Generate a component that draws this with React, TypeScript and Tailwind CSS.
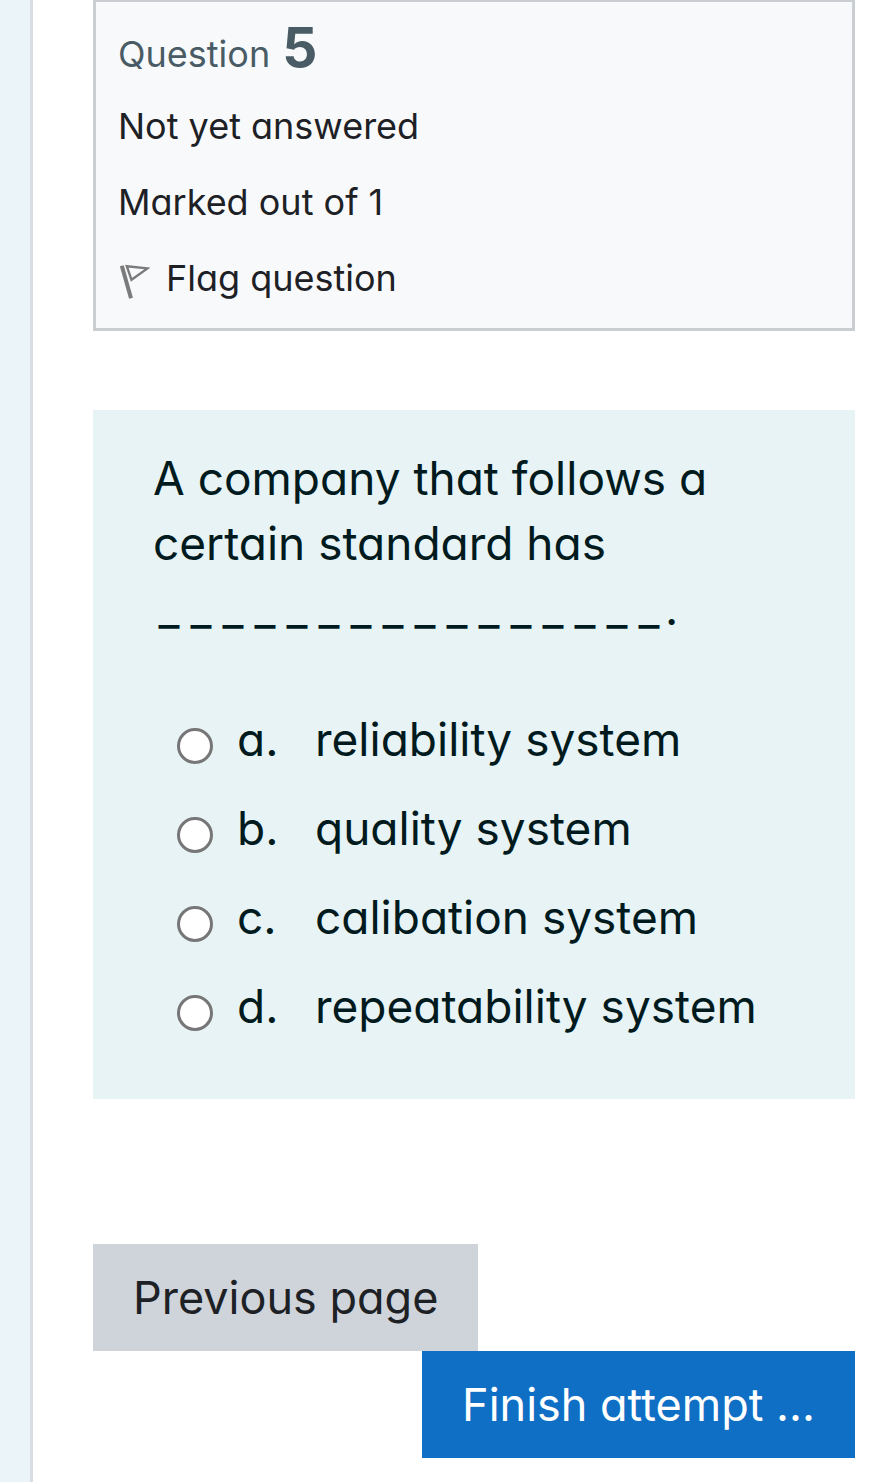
import type { ReactNode } from "react";

interface Option {
  letter: string;
  text: string;
}

const options: Option[] = [
  { letter: "a", text: "reliability system" },
  { letter: "b", text: "quality system" },
  { letter: "c", text: "calibation system" },
  { letter: "d", text: "repeatability system" },
];

const BLANK_LENGTH = 16;

function FlagIcon() {
  return (
    <svg
      className="mt-2 w-8 h-9 shrink-0"
      viewBox="0 0 32 36"
      fill="none"
      stroke="#7b7b7b"
      aria-hidden="true"
    >
      <path d="M3.8 1.8 L13 34.2" strokeWidth="4" />
      <path d="M8.8 2.2 L29.5 4.4 L13.5 15.8 Z" strokeWidth="2.4" />
    </svg>
  );
}

function InfoPanel() {
  return (
    <section className="border-3 border-t-2 border-[#cacdd1] bg-[#f8f9fb] px-[22px] pt-[18px] pb-[23px] text-[36px] leading-[54px] text-[#1d2125]">
      <h1 className="flex items-baseline gap-3 text-[#495c65]">
        Question <span className="text-[55px] font-bold">5</span>
      </h1>
      <div className="mt-[18px]">Not yet answered</div>
      <div className="mt-[22px]">Marked out of 1</div>
      <a href="#flag" className="mt-[22px] flex items-center gap-4">
        <FlagIcon />
        Flag question
      </a>
    </section>
  );
}

function Blank() {
  return (
    <span className="flex">
      {Array.from({ length: BLANK_LENGTH }, (_, i) => (
        <span key={i} className="w-8 text-center">
          _
        </span>
      ))}
      <span>.</span>
    </span>
  );
}

function OptionRow({ letter, text }: Option) {
  const id = `answer-${letter}`;
  return (
    <div className="flex items-center">
      <input
        id={id}
        type="radio"
        name="answer"
        value={letter}
        className="mt-3 size-9 shrink-0 appearance-none rounded-full border-3 border-[#767676] bg-white checked:bg-[#0f6cbf]"
      />
      <label htmlFor={id} className="ml-6 flex">
        <span className="w-[78px] shrink-0">{letter}.</span>
        <span>{text}</span>
      </label>
    </div>
  );
}

function Question({ children }: { children: ReactNode }) {
  return (
    <fieldset className="mt-[79px] bg-[#e7f3f5] px-[60px] pt-9 pb-[60px] text-[46px] leading-[65px] text-[#001a1e]">
      <div>{children}</div>
      <div className="mt-[66px] ml-6 flex flex-col gap-6">
        {options.map((option) => (
          <OptionRow key={option.letter} {...option} />
        ))}
      </div>
    </fieldset>
  );
}

export default function App() {
  return (
    <div className="min-h-screen bg-[#ebf4f8] pl-[30px] font-['Inter',sans-serif] [font-feature-settings:'cv11']">
      <main className="min-h-screen border-l-3 border-[#d8dde1] bg-white pr-[29px] pb-6 pl-[60px]">
        <InfoPanel />
        <Question>
          A company that follows a certain standard has
          <Blank />
        </Question>
        <div className="mt-[145px] flex flex-col text-[45px] leading-[67px]">
          <button className="self-start bg-[#ced4da] px-10 py-5 text-[#1d2125]">
            Previous page
          </button>
          <button className="self-end bg-[#0f6fc5] px-10 py-5 text-white">
            Finish attempt ...
          </button>
        </div>
      </main>
    </div>
  );
}
